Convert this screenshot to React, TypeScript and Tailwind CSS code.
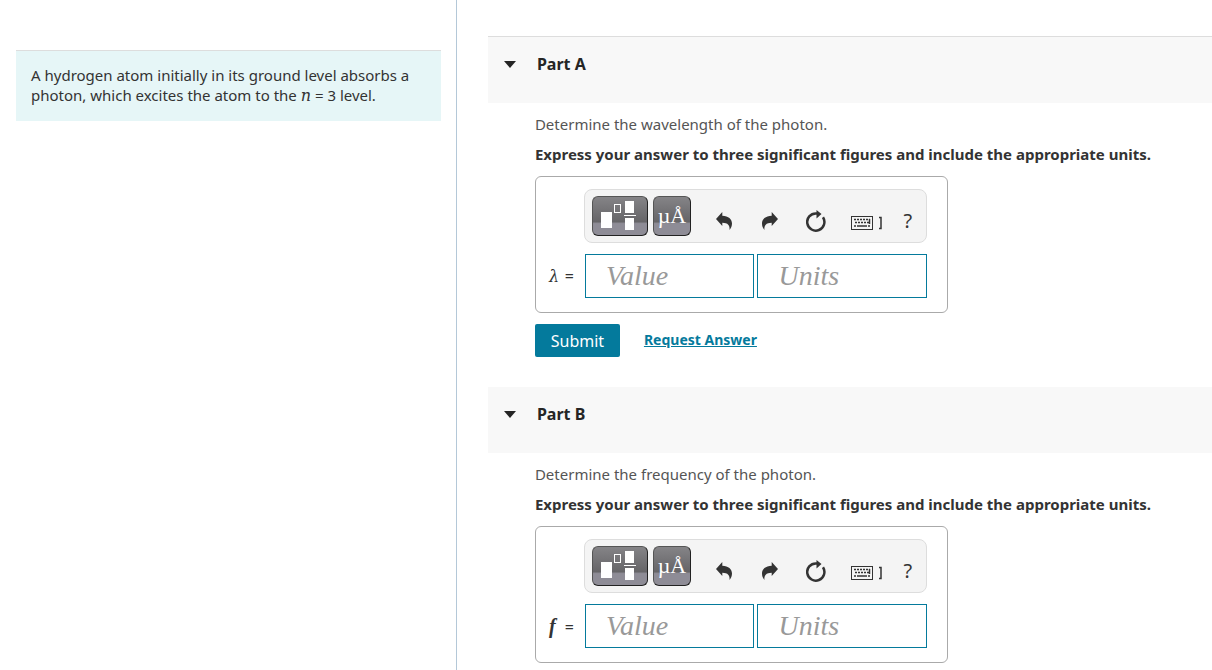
import { ReactNode } from "react";

function TemplateIcon() {
  return (
    <svg width="38" height="32" viewBox="0 0 38 32" aria-hidden="true">
      <rect x="0" y="12" width="11" height="16" fill="#fff" />
      <rect x="13.5" y="4.500" width="6" height="8" fill="none" stroke="#fff" />
      <rect x="24" y="1" width="9" height="12" fill="#fff" />
      <rect x="23" y="15" width="12" height="1" fill="#fff" />
      <rect x="24" y="18" width="9" height="12" fill="#fff" />
    </svg>
  );
}

function UndoIcon() {
  return (
    <svg width="16" height="18" viewBox="0 0 16 18" fill="#333" aria-hidden="true">
      <path d="M0 7 6.3 0v3.7C12.5 4 16 7 16 11.5c0 2.5-.9 4.8-2.5 6.5.6-4.7-1.600-7.200-7.200-7.300V14z" />
    </svg>
  );
}

function RedoIcon() {
  return (
    <svg width="16" height="18" viewBox="0 0 16 18" fill="#333" aria-hidden="true">
      <path d="M16 7 9.7 0v3.7C3.5 4 0 7 0 11.5c0 2.5.9 4.8 2.5 6.5-.6-4.700 1.600-7.200 7.200-7.300V14z" />
    </svg>
  );
}

function ResetIcon() {
  return (
    <svg width="20" height="22" viewBox="0 0 20 22" aria-hidden="true">
      <path
        d="M17 7.300A8.600 8.600 0 1 1 10 3.400h1.500"
        fill="none"
        stroke="#333"
        strokeWidth="2.5"
      />
      <path d="M10.500 0 15.500 4 10.500 8.500z" fill="#333" />
    </svg>
  );
}

function KeyboardIcon() {
  return (
    <svg width="31" height="14" viewBox="0 0 31 14" aria-hidden="true">
      <rect x="0.5" y="0.5" width="21" height="13" fill="none" stroke="#333" />
      <path
        d="M3 3.500h16M4 6.500h14"
        stroke="#333"
        strokeWidth="1.500"
        strokeDasharray="2 1"
        fill="none"
      />
      <path
        d="M3 10h2M6 10h10M17 10h2M18.500 3v5"
        stroke="#333"
        strokeWidth="1.500"
        fill="none"
      />
      <path d="M28 1.500h2v11h-2" stroke="#333" strokeWidth="1.500" fill="none" />
    </svg>
  );
}

interface IconButtonProps {
  label: string;
  className?: string;
  children: ReactNode;
}

function IconButton({ label, className = "", children }: IconButtonProps) {
  return (
    <button
      type="button"
      aria-label={label}
      className={`flex h-10 shrink-0 items-center justify-center text-[#333] ${className}`}
    >
      {children}
    </button>
  );
}

const darkButton =
  "rounded-md border border-[#555] border-r-[#222] border-b-[#222] bg-linear-to-b from-[#858487] from-0% via-[#666568] via-65% to-[#8e8c96] to-70%";

function Toolbar() {
  return (
    <div className="flex h-[54px] items-start rounded-lg border border-[#ddd] bg-[#f4f4f4] px-[7px] pt-[6px]">
      <IconButton label="Templates" className={`w-14 ${darkButton}`}>
        <TemplateIcon />
      </IconButton>
      <IconButton label="Symbols" className={`ml-[5px] w-[38px] ${darkButton}`}>
        <span className="font-['Liberation_Serif',serif] text-[22px] leading-6 text-white">
          µÅ
        </span>
      </IconButton>
      <div className="ml-[10px] flex min-w-0 flex-1 items-center pt-[5px]">
        <IconButton label="Undo" className="w-[46px]">
          <UndoIcon />
        </IconButton>
        <IconButton label="Redo" className="w-[46px]">
          <RedoIcon />
        </IconButton>
        <IconButton label="Reset" className="w-[47px]">
          <ResetIcon />
        </IconButton>
        <IconButton label="Keyboard shortcuts" className="w-[54px] pt-1">
          <KeyboardIcon />
        </IconButton>
        <IconButton label="Help" className="w-7 text-xl">
          ?
        </IconButton>
      </div>
    </div>
  );
}

interface AnswerInputProps {
  label: string;
  placeholder: string;
}

function AnswerInput({ label, placeholder }: AnswerInputProps) {
  return (
    <input
      type="text"
      aria-label={label}
      placeholder={placeholder}
      className="h-11 w-full min-w-0 border border-[#047a9c] bg-white px-5 font-['Liberation_Serif',serif] text-[28px] italic text-[#333] placeholder:text-[#999]"
    />
  );
}

function Actions() {
  return (
    <div className="mt-[11px] flex items-start gap-6">
      <button
        type="submit"
        className="h-[33px] w-[85px] rounded-xs bg-[#047a9c] text-base text-white"
      >
        Submit
      </button>
      <a
        href="#"
        className="pt-[6px] text-sm leading-5 font-bold text-[#047a9c] underline"
      >
        Request Answer
      </a>
    </div>
  );
}

interface PartProps {
  title: string;
  question: string;
  symbol: ReactNode;
  symbolName: string;
  first?: boolean;
  children?: ReactNode;
}

function Part({
  title,
  question,
  symbol,
  symbolName,
  first,
  children,
}: PartProps) {
  return (
    <section className="not-last:pb-[30px]">
      <h2 className={`bg-[#f8f8f8] ${first ? "border-t border-[#ddd]" : ""}`}>
        <button
          type="button"
          aria-expanded="true"
          className="flex h-[66px] w-full items-start px-4 pt-[17px] text-left text-base leading-5 font-bold text-[#252525]"
        >
          <svg width="12" height="20" viewBox="0 0 12 20" aria-hidden="true">
            <path d="M0 7h12l-6 7z" fill="#252525" />
          </svg>
          <span className="ml-[21px]">{title}</span>
        </button>
      </h2>
      <div className="pt-[11px] pl-[47px] text-[15px] leading-5 text-[#333]">
        <p className="mb-[10px] text-[#555]">{question}</p>
        <p className="mb-3 font-bold">
          Express your answer to three significant figures and include the
          appropriate units.
        </p>
        <form onSubmit={(e) => e.preventDefault()}>
          <div className="max-w-[413px] rounded-md border border-[#aaa] pt-3 pr-5 pb-[14px] pl-3">
            <div className="pl-9">
              <Toolbar />
            </div>
            <div className="mt-[11px] flex items-center">
              <span className="flex w-[37px] shrink-0 items-baseline justify-between pr-[11px] pl-px">
                {symbol}
                <span className="text-base leading-5">=</span>
              </span>
              <div className="flex flex-1 gap-[3px]">
                <AnswerInput label={`${symbolName} value`} placeholder="Value" />
                <AnswerInput label={`${symbolName} units`} placeholder="Units" />
              </div>
            </div>
          </div>
          {children}
        </form>
      </div>
    </section>
  );
}

export default function App() {
  return (
    <div className="flex min-h-screen bg-white font-['Noto_Sans',sans-serif]">
      <aside className="w-[37.7%] shrink-0 border-r border-[#b4c8d8] pt-[50px] pr-[15px] pl-4">
        <p className="border-t border-[#ddd] bg-[#e6f6f7] px-[15px] pt-[14px] pb-[15px] text-[15px] leading-5 text-[#333]">
          A hydrogen atom initially in its ground level absorbs a photon, which
          excites the atom to the{" "}
          <i className="font-['DejaVu_Serif',serif] text-base leading-5">n</i> = 3
          level.
        </p>
      </aside>
      <main className="min-w-0 flex-1 pt-9 pl-[31px]">
        <Part
          first
          title="Part A"
          question="Determine the wavelength of the photon."
          symbolName="Wavelength"
          symbol={
            <i className="font-['DejaVu_Serif',serif] text-base leading-5">λ</i>
          }
        >
          <Actions />
        </Part>
        <Part
          title="Part B"
          question="Determine the frequency of the photon."
          symbolName="Frequency"
          symbol={
            <i className="font-['Liberation_Serif',serif] text-xl leading-5 font-bold">
              f
            </i>
          }
        />
      </main>
    </div>
  );
}
